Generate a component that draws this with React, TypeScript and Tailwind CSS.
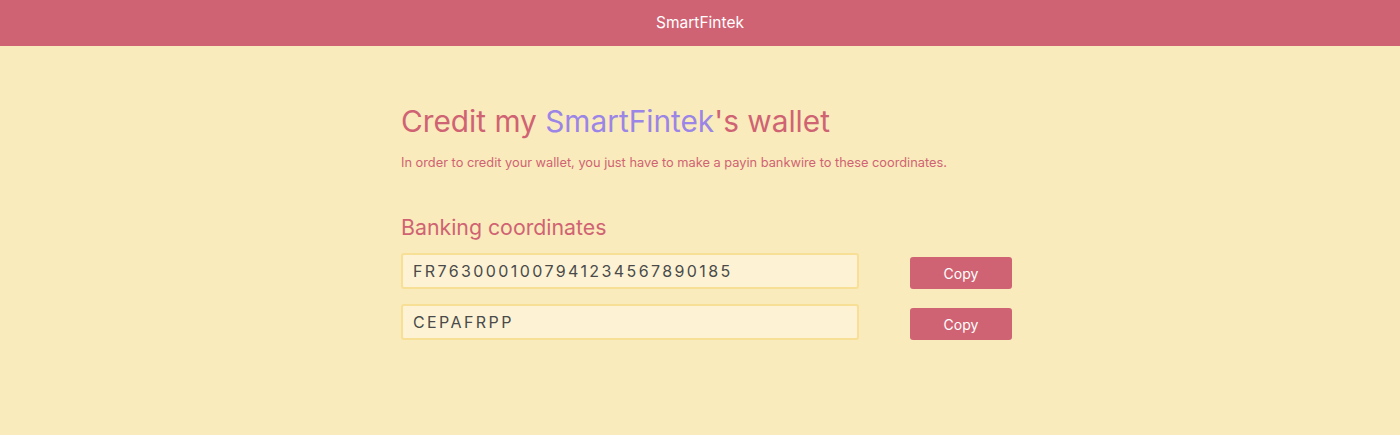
import React from "react";

export default function App() {
  const rows = ["FR7630001007941234567890185", "CEPAFRPP"];
  return (
    <div className="min-h-[435px] bg-[#faebbc]" style={{ fontFamily: "Inter, 'Noto Sans', sans-serif" }}>
      <header className="h-[46px] bg-[#d06373] flex items-center justify-center text-white text-[15.5px]">
        SmartFintek
      </header>
      <main className="w-[598px] mx-auto pt-[55px]">
        <h1 className="text-[29.8px] leading-[40px] text-[#d06373]">
          Credit my <span className="text-[#9b85e6]">SmartFintek</span>'s wallet
        </h1>
        <p className="mt-[12px] text-[12.8px] text-[#d06373]">
          In order to credit your wallet, you just have to make a payin bankwire to these coordinates.
        </p>
        <h2 className="mt-[41px] text-[21.3px] leading-[28px] text-[#d06373]">Banking coordinates</h2>
        <div className="mt-[12px] flex flex-col gap-[15px]">
          {rows.map((r) => (
            <div key={r} className="flex items-center">
              <div className="shrink-0 w-[458px] h-[36px] rounded-[3px] border-2 border-[#f7df95] bg-[#fdf3d4] flex items-center px-[10px] text-[16px] tracking-[2.4px] text-[#4a4a4a]">
                {r}
              </div>
              <button className="shrink-0 ml-[51px] mt-[4px] w-[102px] h-[32px] rounded-[3px] bg-[#d06373] text-white text-[14px]">
                Copy
              </button>
            </div>
          ))}
        </div>
      </main>
    </div>
  );
}
